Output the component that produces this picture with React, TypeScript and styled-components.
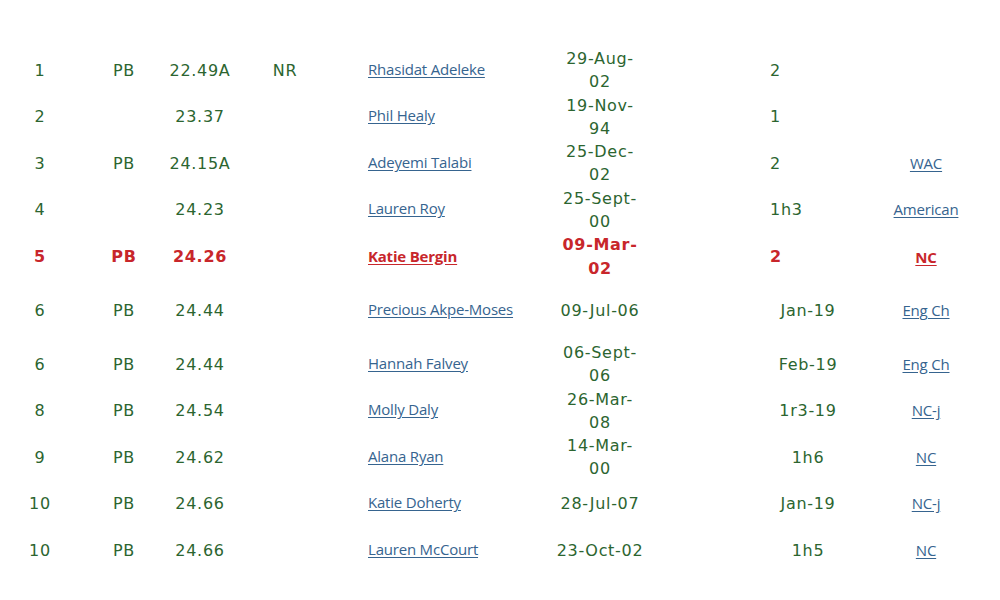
import React from "react";
import styled, { createGlobalStyle } from "styled-components";

type Result = {
  rank: string;
  pb: string;
  time: string;
  nr: string;
  name: string;
  dob: string;
  place: string;
  meet: string;
  centerPlace?: boolean;
  highlight?: boolean;
  height?: number;
  shift?: number;
};

const results: Result[] = [
  { rank: "1", pb: "PB", time: "22.49A", nr: "NR", name: "Rhasidat Adeleke", dob: "29-Aug-\n02", place: "2", meet: "" },
  { rank: "2", pb: "", time: "23.37", nr: "", name: "Phil Healy", dob: "19-Nov-\n94", place: "1", meet: "" },
  { rank: "3", pb: "PB", time: "24.15A", nr: "", name: "Adeyemi Talabi", dob: "25-Dec-\n02", place: "2", meet: "WAC" },
  { rank: "4", pb: "", time: "24.23", nr: "", name: "Lauren Roy", dob: "25-Sept-\n00", place: "1h3", meet: "American" },
  { rank: "5", pb: "PB", time: "24.26", nr: "", name: "Katie Bergin", dob: "09-Mar-\n02", place: "2", meet: "NC", highlight: true },
  { rank: "6", pb: "PB", time: "24.44", nr: "", name: "Precious Akpe-Moses", dob: "09-Jul-06", place: "Jan-19", meet: "Eng Ch", centerPlace: true, height: 55, shift: 7 },
  { rank: "6", pb: "PB", time: "24.44", nr: "", name: "Hannah Falvey", dob: "06-Sept-\n06", place: "Feb-19", meet: "Eng Ch", centerPlace: true, height: 53, shift: 6 },
  { rank: "8", pb: "PB", time: "24.54", nr: "", name: "Molly Daly", dob: "26-Mar-\n08", place: "1r3-19", meet: "NC-j", centerPlace: true },
  { rank: "9", pb: "PB", time: "24.62", nr: "", name: "Alana Ryan", dob: "14-Mar-\n00", place: "1h6", meet: "NC", centerPlace: true },
  { rank: "10", pb: "PB", time: "24.66", nr: "", name: "Katie Doherty", dob: "28-Jul-07", place: "Jan-19", meet: "NC-j", centerPlace: true },
  { rank: "10", pb: "PB", time: "24.66", nr: "", name: "Lauren McCourt", dob: "23-Oct-02", place: "1h5", meet: "NC", centerPlace: true },
];

const GlobalStyle = createGlobalStyle`
  body {
    margin: 0;
    background: #ffffff;
  }
`;

const Sheet = styled.div`
  width: 1000px;
  height: 600px;
  padding-top: 47px;
  box-sizing: border-box;
  overflow: hidden;
`;

const Row = styled.div<{ $height: number; $shift: number; $highlight: boolean }>`
  display: grid;
  grid-template-columns: 80px 88px 64px 106px 202px 120px 196px 140px;
  align-items: center;
  height: ${(p) => p.$height}px;
  padding-top: ${(p) => p.$shift}px;
  box-sizing: border-box;
  font-family: "DejaVu Sans", Verdana, sans-serif;
  font-size: 16px;
  letter-spacing: 0.7px;
  line-height: ${(p) => (p.$highlight ? 24 : 23)}px;
  font-weight: ${(p) => (p.$highlight ? 700 : 400)};
  color: ${(p) => (p.$highlight ? "#c8262b" : "#2c6530")};
`;

const Cell = styled.div`
  text-align: center;
  white-space: pre-line;
`;

const NameCell = styled.div`
  padding-left: 30px;
  line-height: 20px;
  margin-top: -2px;
`;

const PlaceCell = styled.div<{ $center: boolean }>`
  padding: 0 10px 0 110px;
  text-align: ${(p) => (p.$center ? "center" : "left")};
`;

const SheetLink = styled.a<{ $highlight: boolean }>`
  font-family: "Open Sans", "Noto Sans", sans-serif;
  font-size: 15px;
  letter-spacing: -0.2px;
  color: ${(p) => (p.$highlight ? "#c8262b" : "#36648f")};
  text-decoration: underline;
  text-underline-offset: 2px;
  cursor: pointer;
`;

export default function App() {
  return (
    <>
      <GlobalStyle />
      <Sheet>
        {results.map((r, i) => (
          <Row key={i} $height={r.height ?? 46.5} $shift={r.shift ?? 0} $highlight={!!r.highlight}>
            <Cell>{r.rank}</Cell>
            <Cell>{r.pb}</Cell>
            <Cell>{r.time}</Cell>
            <Cell>{r.nr}</Cell>
            <NameCell>
              <SheetLink $highlight={!!r.highlight}>{r.name}</SheetLink>
            </NameCell>
            <Cell>{r.dob}</Cell>
            <PlaceCell $center={!!r.centerPlace}>{r.place}</PlaceCell>
            <Cell>
              {r.meet && <SheetLink $highlight={!!r.highlight}>{r.meet}</SheetLink>}
            </Cell>
          </Row>
        ))}
      </Sheet>
    </>
  );
}
